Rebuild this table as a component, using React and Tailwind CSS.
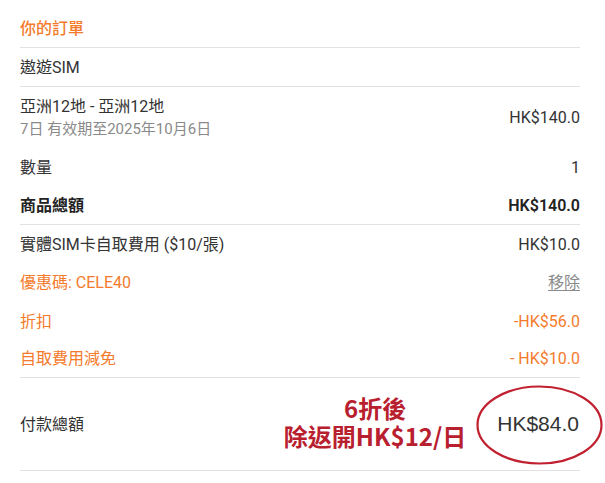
import React from "react";

const font = { fontFamily: 'Roboto, "Noto Sans CJK TC", sans-serif' };

const Row = ({ label, value, className = "", valueClassName = "", height = "h-[38.25px]" }) => (
  <div className={`flex items-center justify-between pt-[2px] ${height} ${className}`}>
    <span>{label}</span>
    <span className={valueClassName}>{value}</span>
  </div>
);

const App = () => {
  return (
    <div className="w-[605px] h-[483px] bg-white overflow-hidden" style={font}>
      <div className="pl-5 pr-[25px] text-[16px] leading-[22px] text-[#333]">
        <div className="h-[48px] flex items-center pt-[10px] border-b border-[#e2e2e2]">
          <h1 className="text-[#f47b2c] font-medium">你的訂單</h1>
        </div>

        <div className="h-[39px] flex items-center pt-[2px] border-b border-[#e2e2e2]">
          <span>遨遊SIM</span>
        </div>

        <div className="h-[60px] flex items-center justify-between pt-[2px]">
          <div>
            <p>亞洲12地 - 亞洲12地</p>
            <p className="text-[15px] text-[#8a8a8a]">7日 有效期至2025年10月6日</p>
          </div>
          <span>HK$140.0</span>
        </div>

        <Row label="數量" value="1" height="h-[39px]" />
        <Row
          label="商品總額"
          value="HK$140.0"
          height="h-[39px]"
          className="font-semibold text-[#222] border-b border-[#e2e2e2]"
        />

        <Row label="實體SIM卡自取費用 ($10/張)" value="HK$10.0" />
        <Row
          label="優惠碼: CELE40"
          value="移除"
          className="text-[#f47b2c]"
          valueClassName="text-[#8a8a8a] underline underline-offset-2"
        />
        <Row label="折扣" value="-HK$56.0" className="text-[#f47b2c]" />
        <Row
          label="自取費用減免"
          value="- HK$10.0"
          className="text-[#f47b2c] border-b border-[#e2e2e2]"
        />

        <div className="h-[93px] flex items-center justify-between pt-[2px] border-b border-[#e2e2e2]">
          <span>付款總額</span>
          <div className="flex items-center gap-[31px]">
            <div
              className="text-center text-[24px] leading-[28px] font-bold text-[#b9202f] mb-[6px]"
              style={{ fontFamily: '"Noto Sans CJK TC", "Noto Sans", sans-serif' }}
            >
              <p>6折後</p>
              <p>除返開HK$12/日</p>
            </div>
            <div className="relative mr-[1px] mb-[2px]">
              <span
                className="text-[21px] leading-[24px] text-[#333]"
                style={{ fontFamily: '"Liberation Sans", Arial, sans-serif' }}
              >
                HK$84.0
              </span>
              <svg
                className="absolute left-[-21px] top-[-27px] pointer-events-none"
                width="127"
                height="80"
                viewBox="0 0 127 80"
              >
                <ellipse cx="63.5" cy="40" rx="62" ry="38.5" fill="none" stroke="#c0202f" strokeWidth="2.2" />
              </svg>
            </div>
          </div>
        </div>
      </div>
    </div>
  );
};

export default App;
